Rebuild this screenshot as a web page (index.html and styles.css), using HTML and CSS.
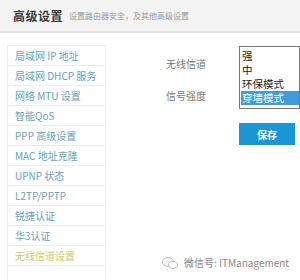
FILE: index.html
```html
<!DOCTYPE html>
<html lang="zh-CN">
<head>
<meta charset="UTF-8">
<title>高级设置</title>
<link rel="stylesheet" href="styles.css">
</head>
<body>
<div class="header">
    <span class="title">高级设置</span>
    <span class="subtitle">设置路由器安全，及其他高级设置</span>
</div>
<div class="main">
    <ul class="menu">
        <li>局域网 IP 地址</li>
        <li>局域网 DHCP 服务</li>
        <li>网络 MTU 设置</li>
        <li>智能QoS</li>
        <li>PPP 高级设置</li>
        <li>MAC 地址克隆</li>
        <li>UPNP 状态</li>
        <li>L2TP/PPTP</li>
        <li>锐捷认证</li>
        <li>华3认证</li>
        <li class="active">无线信道设置</li>
        <li>&nbsp;</li>
    </ul>
    <div class="form">
        <div class="labels">
            <div class="label">无线信道</div>
            <div class="label">信号强度</div>
        </div>
        <div class="controls">
            <div class="listbox">
                <div class="opt">强</div>
                <div class="opt">中</div>
                <div class="opt">环保模式</div>
                <div class="opt selected">穿墙模式</div>
            </div>
            <button class="save">保存</button>
        </div>
    </div>
</div>
<div class="watermark">
    <svg width="16" height="12" viewBox="0 0 16 12">
        <ellipse cx="6" cy="5" rx="5.5" ry="4.5" fill="none" stroke="#bbb" stroke-width="1"/>
        <ellipse cx="11" cy="8" rx="4.5" ry="3.5" fill="#fff" stroke="#bbb" stroke-width="1"/>
    </svg>
    <span>微信号: ITManagement</span>
</div>
</body>
</html>
```

FILE: styles.css
```css
body {
    margin: 0;
    font-family: "Noto Sans CJK SC", "Liberation Sans", sans-serif;
    background: #fff;
    width: 300px;
    height: 280px;
    overflow: hidden;
    position: relative;
}
.header {
    height: 33px;
    background: #f3f3f3;
    border-bottom: 2px solid #e2e2e2;
    display: flex;
    align-items: center;
    padding-left: 13px;
    box-sizing: border-box;
}
.title {
    font-size: 12px;
    font-weight: bold;
    color: #3a3a3a;
    letter-spacing: 0.5px;
}
.subtitle {
    font-size: 8px;
    color: #999;
    margin-left: 6px;
}
.main {
    display: flex;
    padding: 12px 0 0 7px;
}
.menu {
    list-style: none;
    margin: 0;
    padding: 0;
    width: 97px;
    border: 1px solid #eee;
    border-bottom: none;
}
.menu li {
    height: 20px;
    line-height: 20px;
    border-bottom: 1px solid #ececec;
    padding-left: 7px;
    font-size: 10px;
    color: #66a3b8;
    white-space: nowrap;
    box-sizing: border-box;
}
.menu li.active {
    color: #c9cd6a;
}
.form {
    display: flex;
    flex: 1;
}
.labels {
    width: 100px;
    padding-top: 12px;
    text-align: right;
}
.label {
    font-size: 10px;
    color: #777;
    height: 32px;
    line-height: 14px;
}
.controls {
    margin-left: 33px;
    padding-top: 1px;
}
.listbox {
    width: 61px;
    height: 63px;
    border: 1px solid #777;
    padding: 2px 0 0 1px;
    box-sizing: border-box;
}
.opt {
    font-size: 10.5px;
    line-height: 14px;
    height: 14px;
    overflow: hidden;
    color: #222;
    padding-left: 1px;
}
.opt.selected {
    background: #3d9de0;
    color: #fff;
}
.save {
    display: block;
    margin-top: 14px;
    width: 56px;
    height: 22px;
    border: none;
    background: #1b95d3;
    color: #fff;
    font-family: inherit;
    font-size: 10px;
    font-weight: bold;
    padding: 0;
}
.watermark {
    position: absolute;
    left: 162px;
    top: 255px;
    display: flex;
    align-items: center;
    gap: 6px;
    font-size: 10px;
    color: #888;
}
```
